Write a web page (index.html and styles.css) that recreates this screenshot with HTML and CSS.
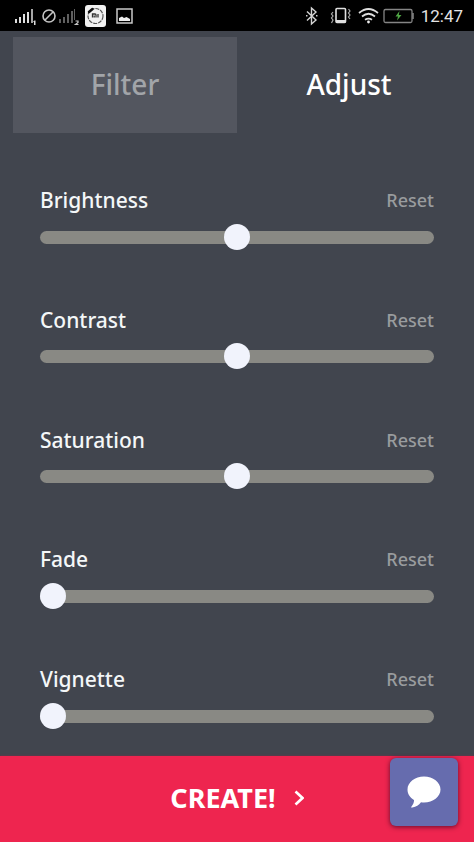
FILE: index.html
```html
<!DOCTYPE html>
<html lang="en">
<head>
<meta charset="utf-8">
<meta name="viewport" content="width=device-width, initial-scale=1">
<title>Adjust</title>
<link rel="stylesheet" href="styles.css">
</head>
<body>
<header class="status">
  <div class="status-group">
    <svg width="120" height="31" viewBox="0 0 120 31" aria-hidden="true">
      <g fill="#dedede">
        <rect x="0" y="19" width="2" height="4"/><rect x="4" y="17" width="2" height="6"/><rect x="8" y="14" width="2" height="9"/><rect x="12" y="12" width="2" height="11"/><rect x="16" y="9" width="2" height="14" opacity=".75"/>
        <path d="M18 21.500l1.500-1h1V25H19v-3z"/>
      </g>
      <g fill="none" stroke="#c4c4c4" stroke-width="1.600"><circle cx="34" cy="16" r="6"/><path d="M30 20l8-8"/></g>
      <g fill="#606060">
        <rect x="44" y="19" width="2" height="4"/><rect x="48" y="17" width="2" height="6"/><rect x="52" y="14" width="2" height="9"/><rect x="56" y="11" width="2" height="12"/><rect x="59" y="9" width="1" height="11"/>
      </g>
      <path d="M60.500 21h2.500v1.500l-2.500 2H63.500" fill="none" stroke="#c8c8c8" stroke-width="1.200"/>
      <rect x="70" y="5" width="21" height="22" rx="3" fill="#f1f1f1"/>
      <circle cx="80.500" cy="16" r="7.500" fill="none" stroke="#555" stroke-width="1.200" stroke-dasharray="4 1"/>
      <path d="M74 12l3.500-3" stroke="#111" stroke-width="2.500" stroke-linecap="round"/>
      <path d="M77.500 17.500V14h2.500q1 0 1 1v2.500M79.200 15.500v2M83 14v3.500" fill="none" stroke="#333" stroke-width="1.300"/>
      <rect x="102" y="9" width="15" height="14" fill="none" stroke="#c9c9c9" stroke-width="1.500"/>
      <path d="M104 21v-3l3-1.500 2 1.500 2.500-1 3.500 2v2z" fill="#eee"/>
    </svg>
  </div>
  <div class="status-group">
    <svg width="108" height="31" viewBox="0 0 108 31" aria-hidden="true">
      <path d="M1 11.500l9 8.500-4.500 4V8l4.500 4L1 20.500" fill="none" stroke="#d5d5d5" stroke-width="1.400"/>
      <path d="M0 15h1.500v1.500H0zM10 15h1.500v1.500H10z" fill="#ccc"/>
      <rect x="30" y="8.500" width="9.500" height="14" rx="1" fill="none" stroke="#e0e0e0" stroke-width="1.600"/>
      <path d="M30 20h9.500v3H30z" fill="#e0e0e0"/>
      <path d="M27 12l-1.500 2 1.500 2-1.500 2 1.500 2-1.500 3M42.500 9L44 11l-1.500 2 1.500 2-1.500 2 1.500 2" fill="none" stroke="#aaa" stroke-width="1.200"/>
      <g fill="none" stroke="#dedede" stroke-width="1.700"><path d="M53 13q9.500-8 19 0M56 16.500q6.500-5.500 13 0M59 19.800q3.500-2.500 7 0"/></g>
      <circle cx="62.500" cy="22" r="1.400" fill="#eee"/>
      <rect x="78" y="9.500" width="28" height="13" rx="1.500" fill="none" stroke="#858585" stroke-width="1.300"/>
      <path d="M107 13v6" stroke="#888" stroke-width="1.500"/>
      <path d="M93.500 11l-4 5.500h2.500l-1 4 4.500-5.500h-2.700z" fill="#4fa644"/>
    </svg>
    <time class="clock">12:47</time>
  </div>
</header>

<nav class="tabs">
  <button class="tab tab-idle" type="button">Filter</button>
  <button class="tab" type="button" aria-current="true">Adjust</button>
</nav>

<main class="controls">
  <section class="control">
    <div class="control-head"><label for="brightness">Brightness</label><button class="reset" type="button">Reset</button></div>
    <input class="slider" id="brightness" type="range" min="-100" max="100" value="0">
  </section>
  <section class="control">
    <div class="control-head"><label for="contrast">Contrast</label><button class="reset" type="button">Reset</button></div>
    <input class="slider" id="contrast" type="range" min="-100" max="100" value="0">
  </section>
  <section class="control">
    <div class="control-head"><label for="saturation">Saturation</label><button class="reset" type="button">Reset</button></div>
    <input class="slider" id="saturation" type="range" min="-100" max="100" value="0">
  </section>
  <section class="control">
    <div class="control-head"><label for="fade">Fade</label><button class="reset" type="button">Reset</button></div>
    <input class="slider" id="fade" type="range" min="0" max="100" value="0">
  </section>
  <section class="control">
    <div class="control-head"><label for="vignette">Vignette</label><button class="reset" type="button">Reset</button></div>
    <input class="slider" id="vignette" type="range" min="0" max="100" value="0">
  </section>
</main>

<footer class="footer">
  <button class="create" type="button">CREATE!
    <svg width="10" height="16" viewBox="0 0 10 16" aria-hidden="true"><path d="M1.500 1.500L8.500 8l-7 6.500" fill="none" stroke="#fff" stroke-width="2.600"/></svg>
  </button>
  <button class="chat" type="button" aria-label="Chat">
    <svg width="34" height="32" viewBox="0 0 34 32" aria-hidden="true"><path d="M17 .5C8 .5.500 6.300.500 13.500c0 4.500 2.500 8 6.500 10.500.2 2.500-1 4.800-2.500 6.500-.6.800-.2 1.300.8 1.100 4-.7 6.500-2.500 8.700-5.300 1 .2 2 .2 3 .2 9 0 16.500-5.800 16.500-13S26 .5 17 .5z" fill="#fff"/></svg>
  </button>
</footer>
</body>
</html>
```
FILE: styles.css
```css
* {
  box-sizing: border-box;
}

body {
  margin: 0;
  min-height: 100vh;
  display: flex;
  flex-direction: column;
  background: #41454e;
  color: #f4f7f8;
  font-family: "Noto Sans", "Open Sans", sans-serif;
  font-weight: 500;
}

button {
  border: 0;
  padding: 0;
  background: none;
  color: inherit;
  font: inherit;
  cursor: pointer;
}

svg {
  display: block;
}

.status {
  height: 31px;
  padding: 0 11px 0 15px;
  display: flex;
  justify-content: space-between;
  background: #000;
}

.status-group {
  display: flex;
  align-items: center;
  gap: 7px;
}

.clock {
  color: #e4e4e4;
  font: 400 17px/32px Roboto, sans-serif;
}

.tabs {
  display: grid;
  grid-template-columns: 1fr 1fr;
  padding: 6px 13px 0;
}

.tab {
  height: 96px;
  padding-bottom: 2px;
  font-size: 28px;
  line-height: 36px;
  color: #fff;
}

.tab-idle {
  background: #53565f;
  color: #a2a5a9;
}

.controls {
  flex: 1;
  display: flex;
  flex-direction: column;
  justify-content: space-between;
  gap: 24px;
  padding: 54px 40px 27px;
}

.control {
  display: grid;
  gap: 11px;
}

.control-head {
  display: flex;
  justify-content: space-between;
  align-items: center;
  font-size: 21px;
  line-height: 26px;
}

.reset {
  color: #999c9e;
  font-size: 18px;
  line-height: 26px;
}

.slider {
  appearance: none;
  width: 100%;
  height: 26px;
  margin: 0;
  background: none;
}

.slider::-webkit-slider-runnable-track {
  height: 13px;
  border-radius: 7px;
  background: #898984;
}

.slider::-webkit-slider-thumb {
  appearance: none;
  width: 26px;
  height: 26px;
  margin-top: -7px;
  border-radius: 50%;
  background: #f1f3fc;
}

.footer {
  position: relative;
  background: #ee254f;
  box-shadow: 0 0 2px #802c45;
}

.create {
  width: 100%;
  height: 86px;
  padding-bottom: 2px;
  display: flex;
  justify-content: center;
  align-items: center;
  gap: 18px;
  color: #fff;
  font-size: 27px;
  font-weight: 700;
  line-height: 32px;
}

.chat {
  position: absolute;
  top: 2px;
  right: 16px;
  width: 68px;
  height: 68px;
  display: grid;
  place-items: center;
  border-radius: 6px;
  background: #666cae;
  box-shadow: 0 1px 5px rgba(40, 0, 30, 0.7);
}
```
